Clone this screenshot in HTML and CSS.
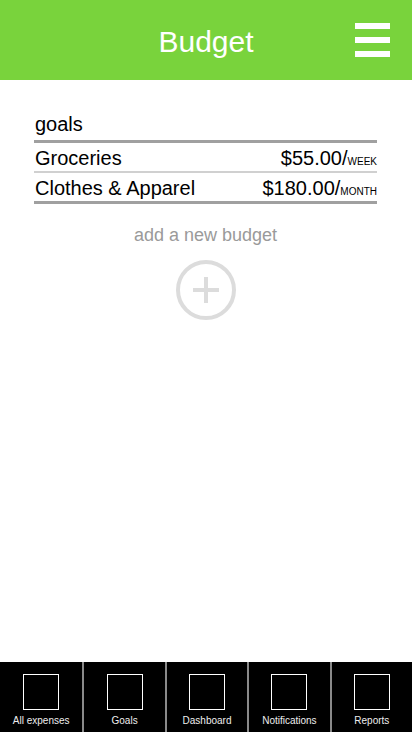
FILE: index.html
```html
<!DOCTYPE html>
<html lang="en">
<head>
<meta charset="utf-8">
<title>Budget</title>
<link rel="stylesheet" href="styles.css">
</head>
<body>
<div class="app">
  <header class="topbar">
    <span class="spacer"></span>
    <h1 class="title">Budget</h1>
    <button class="menu" aria-label="Menu">
      <span class="bar"></span><span class="bar"></span><span class="bar"></span>
    </button>
  </header>
  <main class="content">
    <section class="goals">
      <div class="goals-head">goals</div>
      <div class="row">
        <span class="name">Groceries</span>
        <span class="amount">$55.00/<span class="period">WEEK</span></span>
      </div>
      <div class="row last">
        <span class="name">Clothes &amp; Apparel</span>
        <span class="amount">$180.00/<span class="period">MONTH</span></span>
      </div>
    </section>
    <div class="add">
      <div class="add-label">add a new budget</div>
      <svg class="add-icon" width="60" height="60" viewBox="0 0 60 60">
        <circle cx="30" cy="30" r="28" fill="none" stroke="#dcdcdc" stroke-width="4"/>
        <path d="M17 30H43M30 17V43" stroke="#dcdcdc" stroke-width="4" fill="none"/>
      </svg>
    </div>
  </main>
  <nav class="tabbar">
    <a class="tab"><span class="tab-icon"></span><span class="tab-label">All expenses</span></a>
    <a class="tab"><span class="tab-icon"></span><span class="tab-label">Goals</span></a>
    <a class="tab"><span class="tab-icon"></span><span class="tab-label">Dashboard</span></a>
    <a class="tab"><span class="tab-icon"></span><span class="tab-label">Notifications</span></a>
    <a class="tab"><span class="tab-icon"></span><span class="tab-label">Reports</span></a>
  </nav>
</div>
</body>
</html>
```
FILE: styles.css
```css
* { box-sizing: border-box; }
html, body { margin: 0; padding: 0; }
body {
  font-family: "Liberation Sans", Arial, sans-serif;
  background: #fff;
  color: #000;
}
.app {
  height: 732px;
  display: flex;
  flex-direction: column;
}
.topbar {
  height: 80px;
  background: #79d33c;
  display: grid;
  grid-template-columns: 1fr auto 1fr;
  align-items: start;
}
.title {
  margin: 0;
  padding-top: 25px;
  font-size: 30px;
  font-weight: normal;
  line-height: 34px;
  color: #fff;
}
.menu {
  justify-self: end;
  margin: 23px 22px 0 0;
  padding: 0;
  border: 0;
  background: none;
  display: flex;
  flex-direction: column;
  gap: 8px;
  width: 35px;
}
.bar {
  display: block;
  height: 6px;
  width: 35px;
  background: #fff;
}
.content {
  flex: 1;
  padding: 32px 35px 0 34px;
}
.goals-head {
  font-size: 20px;
  line-height: 24px;
  padding: 0 0 4px 1px;
  border-bottom: 3px solid #a0a0a0;
}
.row {
  display: flex;
  justify-content: space-between;
  align-items: baseline;
  height: 30px;
  font-size: 20px;
  line-height: 25px;
  padding: 3px 0 0 1px;
  border-bottom: 2px solid #d0d0d0;
}
.row.last {
  height: 31px;
  border-bottom: 3px solid #a0a0a0;
}
.amount { white-space: nowrap; line-height: 25px; }
.period { font-size: 10px; line-height: 10px; }
.add {
  display: flex;
  flex-direction: column;
  align-items: center;
  margin-top: 20px;
}
.add-label {
  font-size: 18px;
  line-height: 22px;
  color: #9a9a9a;
}
.add-icon {
  display: block;
  margin-top: 14px;
}
.tabbar {
  height: 70px;
  background: #000;
  display: grid;
  grid-template-columns: repeat(5, 1fr);
}
.tab {
  display: flex;
  flex-direction: column;
  align-items: center;
  padding-top: 12px;
  border-left: 2px solid #8a8a8a;
  color: #eee;
}
.tab:first-child { border-left: 0; }
.tab-icon {
  width: 36px;
  height: 36px;
  border: 1px solid #fff;
}
.tab-label {
  margin-top: 5px;
  font-size: 10px;
  line-height: 12px;
}
```
